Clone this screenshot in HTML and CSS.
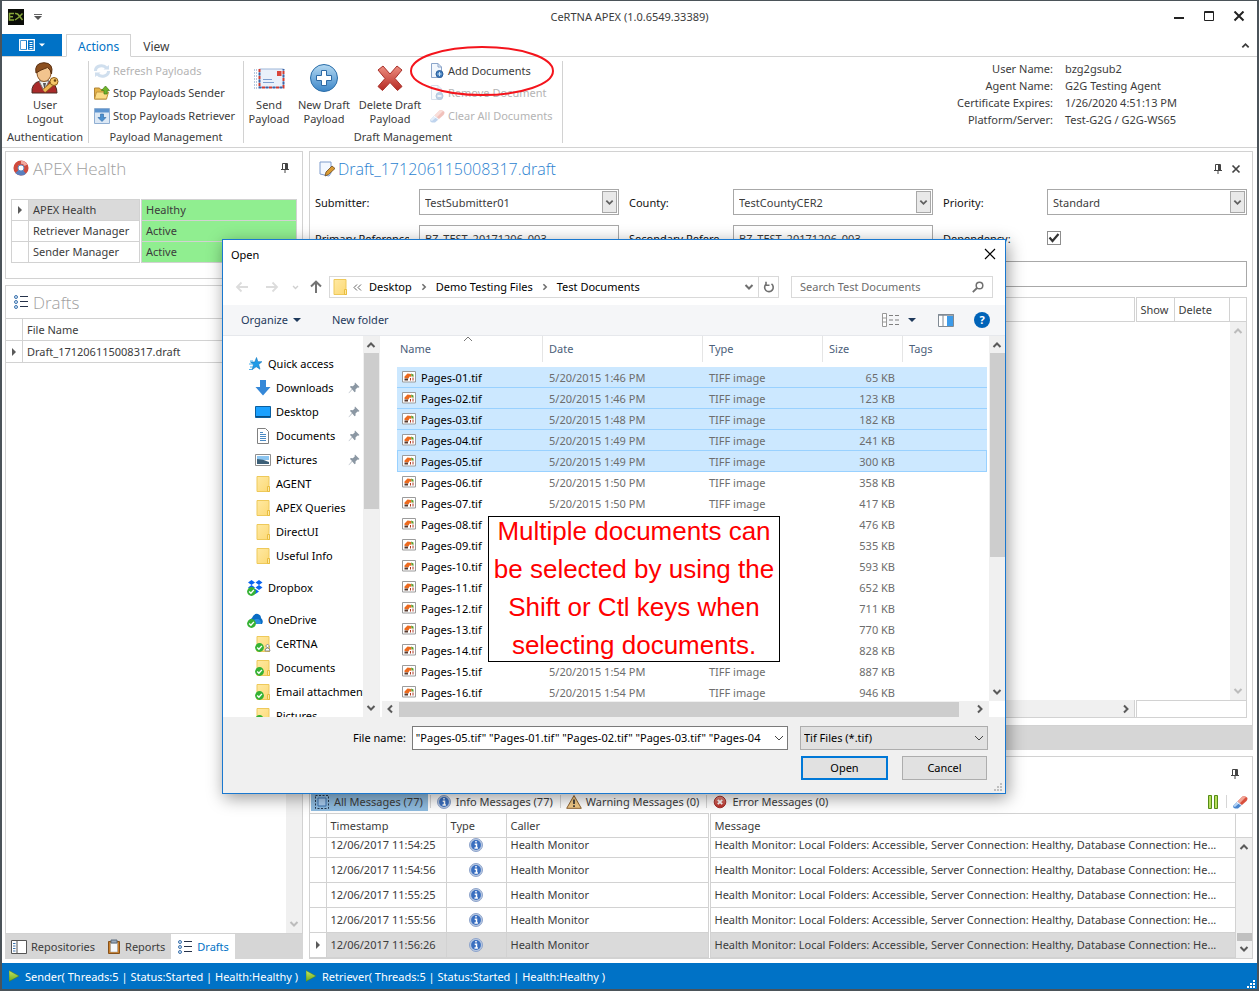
FILE: index.html
```html
<!DOCTYPE html>
<html lang="en">
<head>
<meta charset="utf-8">
<title>CeRTNA APEX</title>
<link rel="stylesheet" href="styles.css">
</head>
<body>
<svg class="defs" aria-hidden="true">
  <defs>
    <linearGradient id="gBlue" x1="0" y1="0" x2="0" y2="1"><stop offset="0" stop-color="#b4d9f2"/><stop offset="1" stop-color="#3c86c8"/></linearGradient>
    <linearGradient id="gRed" x1="0" y1="0" x2="0" y2="1"><stop offset="0" stop-color="#ee8e80"/><stop offset="1" stop-color="#b52a24"/></linearGradient>
    <linearGradient id="gFold" x1="0" y1="0" x2="1" y2="1"><stop offset="0" stop-color="#ffe9a2"/><stop offset="1" stop-color="#fcd975"/></linearGradient>
    <linearGradient id="gGreen" x1="0" y1="0" x2="0" y2="1"><stop offset="0" stop-color="#c5e860"/><stop offset="1" stop-color="#6aa81c"/></linearGradient>
    <symbol id="i-info" viewBox="0 0 16 16"><circle cx="8" cy="8" r="6.500" fill="#b9c9e2" stroke="#8ea4cc"/><circle cx="8" cy="8" r="4.900" fill="#3a6fc0"/><path d="M8 4v1.600M6.700 7.200H8.500v3.500M6.500 11h3.400" stroke="#fff" stroke-width="1.500" fill="none"/></symbol>
    <symbol id="i-up" viewBox="0 0 10 10"><path d="M1.500 7L5 3.500 8.500 7" fill="none" stroke="currentColor" stroke-width="2"/></symbol>
    <symbol id="i-down" viewBox="0 0 10 10"><path d="M1.500 3L5 6.500 8.500 3" fill="none" stroke="currentColor" stroke-width="2"/></symbol>
    <symbol id="i-left" viewBox="0 0 10 10"><path d="M7 1.500L3.500 5 7 8.500" fill="none" stroke="currentColor" stroke-width="2"/></symbol>
    <symbol id="i-right" viewBox="0 0 10 10"><path d="M3 1.500L6.500 5 3 8.500" fill="none" stroke="currentColor" stroke-width="2"/></symbol>
    <symbol id="i-caret" viewBox="0 0 8 8"><path d="M0 2h8L4 6z" fill="currentColor"/></symbol>
    <symbol id="i-tri" viewBox="0 0 8 8"><path d="M2 0l4 4-4 4z" fill="#5a5a5a"/></symbol>
    <symbol id="i-pin" viewBox="0 0 10 10"><path d="M2.500 6V.500h5V6M1 6.500h8M5 7v3" fill="none" stroke="#444"/><path d="M5 1h2v5H5z" fill="#444"/></symbol>
    <symbol id="i-close" viewBox="0 0 10 10"><path d="M1.500 1.500l7 7M8.500 1.500l-7 7" stroke="#444" stroke-width="1.700"/></symbol>
    <symbol id="i-folder" viewBox="0 0 16 16"><path d="M2 0.500h12v9l.5 6H2z" fill="url(#gFold)" stroke="#eec95a"/><path d="M12.500 10.500h2v5h-2z" fill="#ffe9a2" stroke="#e9bd3f"/></symbol>
    <symbol id="i-tick" viewBox="0 0 16 16"><circle cx="4.500" cy="11.500" r="4.400" fill="#35b234"/><path d="M2.200 11.500l1.700 1.800 3-3.400" stroke="#fff" stroke-width="1.400" fill="none"/></symbol>
    <symbol id="i-spin" viewBox="0 0 12 12"><path d="M7 .5l4.500 4.500-1.200.7-.8-.3-2 2 .1 2.200-1 .6L4.300 7.500 1 11 .5 11.200 1 10.600 4 7 2 5l.7-.9 2.200.1 2-2-.3-.9z" fill="#8b97a3"/></symbol>
    <symbol id="i-list" viewBox="0 0 16 16"><g fill="#d6e6f8" stroke="#3e74ad"><circle cx="3" cy="3" r="1.500"/><circle cx="3" cy="8" r="1.500"/><circle cx="3" cy="13" r="1.500"/></g><path d="M7 2.500h8M7 7.500h8M7 12.500h8" stroke="#26324a"/></symbol>
    <symbol id="i-tif" viewBox="0 0 14 12"><path d="M.5.500h13v10.500H.500z" fill="#fff" stroke="#9b9b9b"/><path d="M2.500 5.500l3-3 3.500.5.500 3-2-.5-1 2-4-.5z" fill="#ec6a1f"/><path d="M9 2.500l2.500 1v2.500L9.500 5z" fill="#5d9b2b"/><path d="M2.500 7.500H6V9.500H2.500z" fill="#57382c"/><path d="M8.500 7v2.500M11 6.500v3" stroke="#b03a24"/></symbol>
    <symbol id="i-eraser" viewBox="0 0 16 16"><path d="M1 12l4.500-4.500 4.500 3.500-4 3.500H3q-2-.5-2-2.500z" fill="#4a86cf"/><path d="M1 12l4.500-4.500 2 1.600L3 13z" fill="#b4d2f3"/><path d="M5.500 7.500l5-5q3-1 5 1.500 0 2-1 3l-4.500 4z" fill="#d8503e"/><path d="M5.500 7.500l5-5q2-.7 3.500.6L7.800 9.200z" fill="#f2a697"/><path d="M5 8l4.700 3.700" stroke="#fff"/></symbol>
    <symbol id="i-play" viewBox="0 0 10 12"><path d="M0 .5L10 6 0 11.500z" fill="url(#gGreen)" stroke="#4e7d1c" stroke-width=".5"/></symbol>
    <symbol id="i-doc" viewBox="0 0 16 16"><path d="M2.500.500h6.500l3.500 3.500v10.500h-10z" fill="#f2f7fd" stroke="#8ba5ca"/><path d="M9 .5V4h3.500" fill="none" stroke="#8ba5ca"/><circle cx="10.500" cy="11" r="3.500" fill="#3f7cbd" stroke="#2c5e99"/><path d="M8.500 11h4M10.500 9v4" stroke="#cfe3f6"/></symbol>
    <symbol id="i-docminus" viewBox="0 0 16 16"><path d="M2.500.500h6.500l3.500 3.500v10.500h-10z" fill="#f2f7fd" stroke="#8ba5ca"/><path d="M9 .5V4h3.500" fill="none" stroke="#8ba5ca"/><circle cx="10.500" cy="11" r="3.500" fill="#3f7cbd" stroke="#2c5e99"/><path d="M8.500 11h4" stroke="#fff" stroke-width="1.500"/></symbol>
    <symbol id="i-grip" viewBox="0 0 8 8"><path d="M6 0h2v2H6zM3 3h2v2H3zM6 3h2v2H6zM0 6h2v2H0zM3 6h2v2H3zM6 6h2v2H6z" fill="currentColor"/></symbol>
  </defs>
</svg>

<div class="app">
  <header class="titlebar">
    <div class="quick">
      <svg width="16" height="16" viewBox="0 0 16 16"><path d="M0 0h16v16H0z" fill="#0b0d08"/><path d="M6 4.500H1.500v6.500H6M1.500 7.700H5M7 4.500q2.500-.5 4 2l3.500 4.500M14.500 4.500l-4 4-3.500 2.500" fill="none" stroke="#86a63a" stroke-width="1.500"/></svg>
      <svg width="8" height="8" viewBox="0 0 8 8"><path d="M0 1.500h8" stroke="#666"/><path d="M0 3h8L4 7z" fill="#555"/></svg>
    </div>
    <h1>CeRTNA APEX (1.0.6549.33389)</h1>
    <div class="winbtns">
      <button aria-label="Minimize"><svg width="12" height="12" viewBox="0 0 12 12"><path d="M1 7h10" stroke="#222" stroke-width="2"/></svg></button>
      <button aria-label="Maximize"><svg width="12" height="12" viewBox="0 0 12 12"><path d="M1.500.500h9v9h-9zM1 1.500h10" fill="none" stroke="#222"/></svg></button>
      <button aria-label="Close"><svg width="12" height="12" viewBox="0 0 12 12"><path d="M1.500.500l9 9M10.500.500l-9 9" stroke="#222" stroke-width="2"/></svg></button>
    </div>
  </header>

  <nav class="tabs">
    <button class="filetab" aria-label="Application menu">
      <svg width="16" height="14" viewBox="0 0 16 14"><path d="M.7 1.700h14.600v10.600H.700z" fill="none" stroke="#fff" stroke-width="1.300"/><path d="M2 3h5v8H2z" fill="#fff"/><path d="M8.500 2v10M10.500 4.500h3M10.500 6.500h3M10.500 8.500h3M10.500 10.500h3" stroke="#fff"/></svg>
      <svg width="6" height="6"><use href="#i-caret"/></svg>
    </button>
    <button class="tab active">Actions</button>
    <button class="tab">View</button>
    <button class="collapse" aria-label="Collapse ribbon"><svg width="9" height="9"><use href="#i-up"/></svg></button>
  </nav>

  <section class="ribbon">
    <div class="group auth">
      <div class="tools">
        <button class="big">
          <svg width="32" height="32" viewBox="0 0 32 32"><path d="M3 31q-1-10 8-12h9q8 3 8 12z" fill="#a92a2a" stroke="#4c2a22"/><path d="M10 19l5 10 5-10z" fill="#f0f0f0" stroke="#777"/><path d="M14 21h3l-1.500 7z" fill="#555"/><ellipse cx="15" cy="11" rx="7" ry="8.500" fill="#f2c48e" stroke="#8a5524"/><path d="M7 11Q5 1 15 .7 25 1 22.500 12q-1-5-4-6.500Q11 8 7 11z" fill="#8c4f1e" stroke="#5b3010"/><path d="M15 29l8-7" stroke="#8a5a18" stroke-width="4.500"/><path d="M15 29l8-7" stroke="#efb652" stroke-width="3"/><circle cx="25" cy="19.500" r="4" fill="#f5c668" stroke="#8a5a18"/><circle cx="26" cy="18.500" r="1.300" fill="#6b4310"/></svg>
          <span>User<br>Logout</span>
        </button>
      </div>
      <div class="caption">Authentication</div>
    </div>
    <div class="group payload">
      <div class="tools">
        <div class="stack">
          <button class="small" disabled><svg width="16" height="16" viewBox="0 0 16 16"><path d="M1.500 8a6 5 0 0 1 11-3M14.500 8a6 5 0 0 1-11 3" fill="none" stroke="#7ba4cf" stroke-width="3"/><path d="M9.500 6.500h5.500V2zM6.500 9.500H1V14z" fill="#7ba4cf"/></svg>Refresh Payloads</button>
          <button class="small"><svg width="16" height="16" viewBox="0 0 16 16"><path d="M.5 3h5l1 1.500h6V14H.500z" fill="#e5b347" stroke="#b08436"/><path d="M.5 14l2-7h12l-2 7z" fill="#fbdc86" stroke="#c2953f"/><path d="M11.500 1l4 4.500h-2.300V9H10V5.500H7.500z" fill="#6fb52a" stroke="#447a18" stroke-width=".7"/></svg>Stop Payloads Sender</button>
          <button class="small"><svg width="16" height="16" viewBox="0 0 16 16"><path d="M.5.500h15v15H.500z" fill="#dce8f5" stroke="#8faed2"/><path d="M1 1h14v3.500H1z" fill="#5d94cf"/><path d="M6.500 6h3v3.500H12L8 13.500 4 9.500h2.500z" fill="#4a90d0" stroke="#2b66a3" stroke-width=".6"/></svg>Stop Payloads Retriever</button>
        </div>
      </div>
      <div class="caption">Payload Management</div>
    </div>
    <div class="group draft">
      <div class="tools">
        <button class="big send">
          <svg width="32" height="32" viewBox="0 0 32 32"><path d="M1 8h3M1 11h3M1 14h3M1 17h3M1 20h3M1 23h3M1 26h3" stroke="#6d91bd" stroke-dasharray="1 1"/><path d="M6.500 7h24v18.500h-24z" fill="#eaf1fa" stroke="#9db6d8"/><path d="M6.500 7v18.500h24V7" fill="none" stroke="#d23c32" stroke-width="2" stroke-dasharray="3 4"/><path d="M6.500 10.500v15h24V7" fill="none" stroke="#3b64a7" stroke-width="2" stroke-dasharray="3 4"/><path d="M24 9h4.500v5H24z" fill="#d9463c"/><path d="M10 17.500h9M10 20.500h11" stroke="#7c9ecf"/></svg>
          <span>Send<br>Payload</span>
        </button>
        <button class="big new">
          <svg width="32" height="32" viewBox="0 0 32 32"><circle cx="16" cy="16" r="13.500" fill="url(#gBlue)" stroke="#2a6da8"/><path d="M13.500 8.500h5v5h5v5h-5v5h-5v-5h-5v-5h5z" fill="#fff" stroke="#2c69a4"/></svg>
          <span>New Draft<br>Payload</span>
        </button>
        <button class="big del">
          <svg width="32" height="32" viewBox="0 0 32 32"><path d="M4 8l5-4 7 8 7-8 5 4-7 8.500 7 8-4.500 4-7.500-8-7.500 8-4.500-4 7-8z" fill="url(#gRed)" stroke="#a8302a"/></svg>
          <span>Delete Draft<br>Payload</span>
        </button>
        <div class="stack">
          <button class="small"><svg width="16" height="16"><use href="#i-doc"/></svg>Add Documents</button>
          <button class="small" disabled><svg width="16" height="16"><use href="#i-docminus"/></svg>Remove Document</button>
          <button class="small" disabled><svg width="16" height="16"><use href="#i-eraser"/></svg>Clear All Documents</button>
        </div>
      </div>
      <div class="caption">Draft Management</div>
    </div>
    <dl class="user">
      <dt>User Name:</dt><dd>bzg2gsub2</dd>
      <dt>Agent Name:</dt><dd>G2G Testing Agent</dd>
      <dt>Certificate Expires:</dt><dd>1/26/2020 4:51:13 PM</dd>
      <dt>Platform/Server:</dt><dd>Test-G2G / G2G-WS65</dd>
    </dl>
  </section>

  <main class="main">
    <aside class="side">
      <section class="panel health">
        <div class="phead">
          <svg width="16" height="16" viewBox="0 0 16 16"><circle cx="8" cy="8" r="5.300" fill="none" stroke="#cf4a3d" stroke-width="4.500"/><path d="M11.500 12A5.300 5.300 0 0 1 4 11.500" fill="none" stroke="#5a7fbd" stroke-width="4.500"/><path d="M8 2.300a5.700 5.700 0 0 1 5 3" fill="none" stroke="#f0aaa0" stroke-width="3"/><circle cx="8" cy="8" r="3" fill="#fff" stroke="#5e8cc4"/></svg>
          <h2>APEX Health</h2>
          <button class="pin" aria-label="Pin"><svg width="10" height="10"><use href="#i-pin"/></svg></button>
        </div>
        <table class="grid htable">
          <tr class="cur"><td class="ind"><svg width="8" height="8"><use href="#i-tri"/></svg></td><td class="nm">APEX Health</td><td class="ok">Healthy</td></tr>
          <tr><td class="ind"></td><td class="nm">Retriever Manager</td><td class="ok">Active</td></tr>
          <tr><td class="ind"></td><td class="nm">Sender Manager</td><td class="ok">Active</td></tr>
        </table>
      </section>
      <div class="draftbox">
        <section class="panel drafts">
          <div class="phead">
            <svg width="16" height="16"><use href="#i-list"/></svg>
            <h2>Drafts</h2>
          </div>
          <div class="withbar">
            <table class="grid dtable">
              <tr><th class="ind"></th><th>File Name</th></tr>
              <tr><td class="ind"><svg width="8" height="8"><use href="#i-tri"/></svg></td><td>Draft_171206115008317.draft</td></tr>
            </table>
            <div class="vbar dim"><svg width="10" height="10"><use href="#i-up"/></svg><svg class="end" width="10" height="10"><use href="#i-down"/></svg></div>
          </div>
        </section>
        <nav class="strip">
          <button><svg width="16" height="14" viewBox="0 0 16 14"><path d="M.5.500h15v13H.500zM6 1v12" fill="#fff" stroke="#555"/><path d="M2 3.500h2.500M2 6h2.500M2 8.500h2.500M2 11h2.500" stroke="#3e74ad"/></svg>Repositories</button>
          <button><svg width="14" height="16" viewBox="0 0 14 16"><path d="M1.500 2.500h11v12h-11z" fill="#c9802c" stroke="#875018"/><path d="M3.500 4h7v9h-7z" fill="#f5f8fc" stroke="#999" stroke-width=".5"/><path d="M4 1h6v3H4z" fill="#98a8bb" stroke="#5b6a7d"/></svg>Reports</button>
          <button class="on"><svg width="16" height="16"><use href="#i-list"/></svg>Drafts</button>
        </nav>
      </div>
    </aside>

    <div class="work">
      <section class="panel doc">
        <div class="phead">
          <svg width="16" height="16" viewBox="0 0 16 16"><path d="M1 1h11v11l-2 3-9-2z" fill="#f3f8ff" stroke="#7f9ccc"/><path d="M6 15l1-4 6-6 3 2.500-6.500 6z" fill="#d99a33" stroke="#6d4a1d" stroke-width=".8"/></svg>
          <h2 class="blue">Draft_171206115008317.draft</h2>
          <button class="pin" aria-label="Pin"><svg width="10" height="10"><use href="#i-pin"/></svg></button>
          <button class="pin" aria-label="Close tab"><svg width="10" height="10"><use href="#i-close"/></svg></button>
        </div>
        <form class="form">
          <label for="sub">Submitter:</label>
          <div class="combo"><select id="sub"><option>TestSubmitter01</option></select><span><svg width="9" height="9"><use href="#i-down"/></svg></span></div>
          <label for="cty">County:</label>
          <div class="combo"><select id="cty"><option>TestCountyCER2</option></select><span><svg width="9" height="9"><use href="#i-down"/></svg></span></div>
          <label for="pri">Priority:</label>
          <div class="combo"><select id="pri"><option>Standard</option></select><span><svg width="9" height="9"><use href="#i-down"/></svg></span></div>
          <label for="pref">Primary Reference</label>
          <input type="text" id="pref" value="BZ_TEST_20171206_003">
          <label for="sref">Secondary Refere</label>
          <input type="text" id="sref" value="BZ_TEST_20171206_003">
          <label for="dep">Dependency:</label>
          <div class="check"><input type="checkbox" id="dep" checked><svg width="14" height="14" viewBox="0 0 14 14"><path d="M2.500 6.500l3 3.500 6-7" fill="none" stroke="#333" stroke-width="2.200"/></svg></div>
          <label for="note">Notes:</label>
          <input type="text" id="note" class="wide">
        </form>
        <div class="docs">
          <table class="grid doctable">
            <tr><th></th><th class="show">Show</th><th class="dele">Delete</th><th class="corner"></th></tr>
          </table>
          <div class="docbody"><div class="vbar dim"><svg width="10" height="10"><use href="#i-up"/></svg><svg class="end" width="10" height="10"><use href="#i-down"/></svg></div></div>
          <div class="dochbar"><div class="track"><svg width="10" height="10"><use href="#i-right"/></svg></div><div class="box"></div></div>
        </div>
      </section>
      <div class="strip blank"></div>
      <section class="panel msgs">
        <div class="phead"><button class="pin" aria-label="Pin"><svg width="10" height="10"><use href="#i-pin"/></svg></button></div>
        <div class="mbar">
          <button class="on"><svg width="16" height="16" viewBox="0 0 16 16"><path d="M1.500 1.500h13v13h-13z" fill="none" stroke="#26384f" stroke-dasharray="2 1.500"/><path d="M4 4h8v8H4z" fill="#a9ccee" stroke="#3a73b0"/></svg>All Messages (77)</button>
          <button><svg width="16" height="16"><use href="#i-info"/></svg>Info Messages (77)</button>
          <button><svg width="16" height="16" viewBox="0 0 16 16"><path d="M8 1.500l7.300 12.800H.700z" fill="#f3cb87" stroke="#8c6130"/><path d="M8 5.500v4.500M8 11.300v1.700" stroke="#333" stroke-width="1.700"/></svg>Warning Messages (0)</button>
          <button><svg width="16" height="16" viewBox="0 0 16 16"><circle cx="8" cy="8" r="5.800" fill="url(#gRed)" stroke="#a5312b"/><path d="M5.800 5.800l4.400 4.400M10.200 5.800l-4.400 4.400" stroke="#fff" stroke-width="1.800"/></svg>Error Messages (0)</button>
          <button class="icon pause" aria-label="Pause"><svg width="12" height="16" viewBox="0 0 12 16"><path d="M1.500 1.500h3v13h-3zM7.500 1.500h3v13h-3z" fill="#b6dd5b" stroke="#558c17"/></svg></button>
          <button class="icon" aria-label="Clear"><svg width="16" height="16"><use href="#i-eraser"/></svg></button>
        </div>
        <table class="grid mtable mhead">
          <tr><th class="c0"></th><th class="c1">Timestamp</th><th class="c2">Type</th><th class="c3">Caller</th><th>Message</th><th class="c5"></th></tr>
        </table>
        <div class="mview">
          <div class="mrows">
            <table class="grid mtable">
              <tr><td class="c0"></td><td class="c1">12/06/2017 11:54:25</td><td class="c2"><svg width="16" height="16"><use href="#i-info"/></svg></td><td class="c3">Health Monitor</td><td>Health Monitor: Local Folders: Accessible, Server Connection: Healthy, Database Connection: He...</td></tr>
              <tr><td class="c0"></td><td class="c1">12/06/2017 11:54:56</td><td class="c2"><svg width="16" height="16"><use href="#i-info"/></svg></td><td class="c3">Health Monitor</td><td>Health Monitor: Local Folders: Accessible, Server Connection: Healthy, Database Connection: He...</td></tr>
              <tr><td class="c0"></td><td class="c1">12/06/2017 11:55:25</td><td class="c2"><svg width="16" height="16"><use href="#i-info"/></svg></td><td class="c3">Health Monitor</td><td>Health Monitor: Local Folders: Accessible, Server Connection: Healthy, Database Connection: He...</td></tr>
              <tr><td class="c0"></td><td class="c1">12/06/2017 11:55:56</td><td class="c2"><svg width="16" height="16"><use href="#i-info"/></svg></td><td class="c3">Health Monitor</td><td>Health Monitor: Local Folders: Accessible, Server Connection: Healthy, Database Connection: He...</td></tr>
              <tr class="cur"><td class="c0"><svg width="8" height="8"><use href="#i-tri"/></svg></td><td class="c1">12/06/2017 11:56:26</td><td class="c2"><svg width="16" height="16"><use href="#i-info"/></svg></td><td class="c3">Health Monitor</td><td>Health Monitor: Local Folders: Accessible, Server Connection: Healthy, Database Connection: He...</td></tr>
            </table>
          </div>
          <div class="vbar"><svg width="10" height="10"><use href="#i-up"/></svg><i class="thumb low"></i><svg width="10" height="10"><use href="#i-down"/></svg></div>
        </div>
      </section>
    </div>
  </main>

  <footer class="status">
    <svg width="10" height="12"><use href="#i-play"/></svg><span>Sender( Threads:5 | Status:Started | Health:Healthy )</span>
    <svg width="10" height="12"><use href="#i-play"/></svg><span>Retriever( Threads:5 | Status:Started | Health:Healthy )</span>
    <svg class="grip" width="8" height="8"><use href="#i-grip"/></svg>
  </footer>

  <svg class="ring" width="146" height="52" viewBox="0 0 146 52" aria-hidden="true"><ellipse cx="73" cy="26" rx="71" ry="24" fill="none" stroke="#f4141c" stroke-width="2"/></svg>

  <div class="dialog" role="dialog" aria-labelledby="dlgtitle">
    <div class="dtitle"><h2 id="dlgtitle">Open</h2><button aria-label="Close"><svg width="12" height="12" viewBox="0 0 12 12"><path d="M1 1l10 10M11 1L1 11" stroke="#000" stroke-width="1.200"/></svg></button></div>
    <div class="dnav">
      <button aria-label="Back"><svg width="14" height="14" viewBox="0 0 14 14"><path d="M13 7H2M6.500 2.500L2 7l4.500 4.500" fill="none" stroke="#dcdcdc" stroke-width="1.800"/></svg></button>
      <button aria-label="Forward"><svg width="14" height="14" viewBox="0 0 14 14"><path d="M1 7h11M7.500 2.500L12 7l-4.500 4.500" fill="none" stroke="#dcdcdc" stroke-width="1.800"/></svg></button>
      <button class="rec" aria-label="Recent"><svg width="7" height="7"><use href="#i-down"/></svg></button>
      <button aria-label="Up"><svg width="14" height="14" viewBox="0 0 14 14"><path d="M7 13V2M2 6.500L7 1.700l5 4.800" fill="none" stroke="#747474" stroke-width="2"/></svg></button>
      <div class="addr">
        <svg width="16" height="16"><use href="#i-folder"/></svg>
        <svg class="chev" width="9" height="9" viewBox="0 0 9 9"><path d="M4 1.500L1 4.500l3 3M8 1.500L5 4.500l3 3" fill="none" stroke="#666"/></svg>
        <button>Desktop</button><svg class="chev" width="8" height="8"><use href="#i-right"/></svg>
        <button>Demo Testing Files</button><svg class="chev" width="8" height="8"><use href="#i-right"/></svg>
        <button>Test Documents</button>
        <svg class="drop" width="10" height="10"><use href="#i-down"/></svg>
        <button class="refresh" aria-label="Refresh"><svg width="12" height="12" viewBox="0 0 12 12"><path d="M3 3.200a4.300 4.300 0 1 0 5.500-.3M3 .8v3.500h3.500" fill="none" stroke="#707070" stroke-width="1.600"/></svg></button>
      </div>
      <div class="search"><input type="text" aria-label="Search" placeholder="Search Test Documents"><svg width="12" height="12" viewBox="0 0 12 12"><circle cx="7.500" cy="4.500" r="3.300" fill="none" stroke="#707070" stroke-width="1.500"/><path d="M5 7L.8 11.200" stroke="#707070" stroke-width="1.800"/></svg></div>
    </div>
    <div class="dbar">
      <button>Organize<svg width="8" height="8"><use href="#i-caret"/></svg></button>
      <button class="newf">New folder</button>
      <button class="view" aria-label="View"><svg width="17" height="14" viewBox="0 0 17 14"><path d="M.5.500h4v13h-4zM1 5h3M1 9h3" fill="#fff" stroke="#999"/><path d="M7 2.500h4M13 2.500h4M7 7h4M13 7h4M7 11.500h4M13 11.500h4" stroke="#808080"/></svg><svg width="8" height="8"><use href="#i-caret"/></svg></button>
      <button aria-label="Preview pane"><svg width="16" height="13" viewBox="0 0 16 13"><path d="M.5.500h15v12H.500zM5 1v11" fill="#fff" stroke="#808a94"/><path d="M9 2h6v10H9z" fill="#3d9be9"/><path d="M0 1h16" stroke="#808a94" stroke-width="1.500"/></svg></button>
      <button class="help" aria-label="Help">?</button>
    </div>
    <div class="dbody">
      <div class="tree">
        <ul>
          <li><svg width="16" height="16" viewBox="0 0 16 16"><path d="M9.500 1.500l1.400 4.200h4l-3.200 2.800 1.300 4.700-3.800-2.500-4.200 3 1.500-5L3.500 6h4.300z" fill="#1e9be8" stroke="#1277be" stroke-width=".6"/><path d="M3 5h3M2 8h4M3 11h3M2 13.500h3" stroke="#49b0ee"/></svg>Quick access</li>
          <li class="sub"><svg width="16" height="16" viewBox="0 0 16 16"><path d="M5 0h6v7h4.500L8 15.500.5 7H5z" fill="#3588d8"/></svg>Downloads<svg class="tack" width="12" height="12"><use href="#i-spin"/></svg></li>
          <li class="sub"><svg width="16" height="16" viewBox="0 0 16 16"><path d="M.5 2.500h15v11H.500z" fill="#1ba1ff" stroke="#0b5f9f"/><path d="M1 12.500h14" stroke="#084e84"/></svg>Desktop<svg class="tack" width="12" height="12"><use href="#i-spin"/></svg></li>
          <li class="sub"><svg width="16" height="16" viewBox="0 0 16 16"><path d="M2.500.500h8l3 3v12h-11z" fill="#fff" stroke="#808080"/><path d="M5 4.500h3M5 6.500h6M5 8.500h6M5 10.500h6M5 12.500h6" stroke="#4b8ac4"/></svg>Documents<svg class="tack" width="12" height="12"><use href="#i-spin"/></svg></li>
          <li class="sub"><svg width="16" height="16" viewBox="0 0 16 16"><path d="M.5 2.500h15v11H.500z" fill="#fff" stroke="#8f8f8f"/><path d="M2 4h12v4H2z" fill="#8cc5f0"/><path d="M2 7q6 0 12 3v2H2z" fill="#3c5f77"/></svg>Pictures<svg class="tack" width="12" height="12"><use href="#i-spin"/></svg></li>
          <li class="sub"><svg width="16" height="16"><use href="#i-folder"/></svg>AGENT</li>
          <li class="sub"><svg width="16" height="16"><use href="#i-folder"/></svg>APEX Queries</li>
          <li class="sub"><svg width="16" height="16"><use href="#i-folder"/></svg>DirectUI</li>
          <li class="sub"><svg width="16" height="16"><use href="#i-folder"/></svg>Useful Info</li>
          <li class="root"><svg width="16" height="16" viewBox="0 0 16 16"><path d="M4.500 0L8 2.500 4.500 5 1 2.500zM12 0l3.500 2.500L12 5 8.500 2.500zM4.500 5L8 7.500 4.500 10 1 7.500zM12 5l3.500 2.500L12 10 8.500 7.500zM8.500 9l3.500 2.500L8.500 14 6 11.500z" fill="#0a64f0"/><use href="#i-tick"/></svg>Dropbox</li>
          <li class="root"><svg width="16" height="16" viewBox="0 0 16 16"><path d="M3 12q-2-4 2-6 2-5 6-4 3 1 3 4 3 3 1 6z" fill="#0a6cc4"/><path d="M6 12q0-5 4-5 4 0 4 5" fill="#2b8ee0"/><use href="#i-tick"/></svg>OneDrive</li>
          <li class="sub"><svg width="16" height="16"><use href="#i-folder"/><use href="#i-tick"/><path d="M10 15q0-3 2.500-3t2.500 3zM12.500 8.500a1.500 1.500 0 1 0 .1 0" fill="#fff" stroke="#888"/></svg>CeRTNA</li>
          <li class="sub"><svg width="16" height="16"><use href="#i-folder"/><use href="#i-tick"/></svg>Documents</li>
          <li class="sub"><svg width="16" height="16"><use href="#i-folder"/><use href="#i-tick"/></svg>Email attachments</li>
          <li class="sub"><svg width="16" height="16"><use href="#i-folder"/><use href="#i-tick"/></svg>Pictures</li>
        </ul>
        <div class="vbar"><svg width="10" height="10"><use href="#i-up"/></svg><i class="thumb tall"></i><svg class="end" width="10" height="10"><use href="#i-down"/></svg></div>
      </div>
      <div class="files">
        <div class="flist">
          <table>
            <thead><tr><th class="f1"><div>Name<svg width="10" height="6" viewBox="0 0 10 6"><path d="M1 5l4-4 4 4" fill="none" stroke="#777"/></svg></div></th><th class="f2"><div>Date</div></th><th class="f3"><div>Type</div></th><th class="f4"><div>Size</div></th><th><div class="last">Tags</div></th></tr></thead>
            <tbody>
              <tr class="sel"><td><svg width="14" height="12"><use href="#i-tif"/></svg>Pages-01.tif</td><td>5/20/2015 1:46 PM</td><td>TIFF image</td><td>65 KB</td><td></td></tr>
              <tr class="sel"><td><svg width="14" height="12"><use href="#i-tif"/></svg>Pages-02.tif</td><td>5/20/2015 1:46 PM</td><td>TIFF image</td><td>123 KB</td><td></td></tr>
              <tr class="sel"><td><svg width="14" height="12"><use href="#i-tif"/></svg>Pages-03.tif</td><td>5/20/2015 1:48 PM</td><td>TIFF image</td><td>182 KB</td><td></td></tr>
              <tr class="sel"><td><svg width="14" height="12"><use href="#i-tif"/></svg>Pages-04.tif</td><td>5/20/2015 1:49 PM</td><td>TIFF image</td><td>241 KB</td><td></td></tr>
              <tr class="sel focus"><td><svg width="14" height="12"><use href="#i-tif"/></svg>Pages-05.tif</td><td>5/20/2015 1:49 PM</td><td>TIFF image</td><td>300 KB</td><td></td></tr>
              <tr><td><svg width="14" height="12"><use href="#i-tif"/></svg>Pages-06.tif</td><td>5/20/2015 1:50 PM</td><td>TIFF image</td><td>358 KB</td><td></td></tr>
              <tr><td><svg width="14" height="12"><use href="#i-tif"/></svg>Pages-07.tif</td><td>5/20/2015 1:50 PM</td><td>TIFF image</td><td>417 KB</td><td></td></tr>
              <tr><td><svg width="14" height="12"><use href="#i-tif"/></svg>Pages-08.tif</td><td></td><td></td><td>476 KB</td><td></td></tr>
              <tr><td><svg width="14" height="12"><use href="#i-tif"/></svg>Pages-09.tif</td><td></td><td></td><td>535 KB</td><td></td></tr>
              <tr><td><svg width="14" height="12"><use href="#i-tif"/></svg>Pages-10.tif</td><td></td><td></td><td>593 KB</td><td></td></tr>
              <tr><td><svg width="14" height="12"><use href="#i-tif"/></svg>Pages-11.tif</td><td></td><td></td><td>652 KB</td><td></td></tr>
              <tr><td><svg width="14" height="12"><use href="#i-tif"/></svg>Pages-12.tif</td><td></td><td></td><td>711 KB</td><td></td></tr>
              <tr><td><svg width="14" height="12"><use href="#i-tif"/></svg>Pages-13.tif</td><td></td><td></td><td>770 KB</td><td></td></tr>
              <tr><td><svg width="14" height="12"><use href="#i-tif"/></svg>Pages-14.tif</td><td></td><td></td><td>828 KB</td><td></td></tr>
              <tr><td><svg width="14" height="12"><use href="#i-tif"/></svg>Pages-15.tif</td><td>5/20/2015 1:54 PM</td><td>TIFF image</td><td>887 KB</td><td></td></tr>
              <tr><td><svg width="14" height="12"><use href="#i-tif"/></svg>Pages-16.tif</td><td>5/20/2015 1:54 PM</td><td>TIFF image</td><td>946 KB</td><td></td></tr>
            </tbody>
          </table>
        </div>
        <div class="vbar"><svg width="10" height="10"><use href="#i-up"/></svg><i class="thumb mid"></i><svg class="end" width="10" height="10"><use href="#i-down"/></svg></div>
        <div class="hbar"><svg width="10" height="10"><use href="#i-left"/></svg><i></i><svg width="10" height="10"><use href="#i-right"/></svg></div>
      </div>
    </div>
    <div class="dfoot">
      <label for="fname">File name:</label>
      <div class="fname"><input type="text" id="fname" value='"Pages-05.tif" "Pages-01.tif" "Pages-02.tif" "Pages-03.tif" "Pages-04'><svg width="10" height="10" viewBox="0 0 10 10"><path d="M1 3l4 4 4-4" fill="none" stroke="#444"/></svg></div>
      <div class="right">
        <div class="filter"><select aria-label="File type"><option>Tif Files (*.tif)</option></select><svg width="10" height="10" viewBox="0 0 10 10"><path d="M1 3l4 4 4-4" fill="none" stroke="#444"/></svg></div>
        <div class="acts"><button class="primary">Open</button><button>Cancel</button></div>
      </div>
      <svg class="dgrip" width="8" height="8"><use href="#i-grip"/></svg>
    </div>
    <div class="callout"><p>Multiple documents can<br>be selected by using the<br>Shift or Ctl keys when<br>selecting documents.</p></div>
  </div>
</div>
</body>
</html>
```
FILE: styles.css
```css
* { box-sizing: border-box; }
body { margin: 0; font: 11px/16px "Noto Sans", "Open Sans", sans-serif; color: #3c3c3c; }
button, input, select { font: inherit; color: inherit; margin: 0; }
button { border: 0; background: none; padding: 0; text-align: left; white-space: nowrap; }
h1, h2, p, dl, dd, ul { margin: 0; padding: 0; font-weight: 400; }
ul { list-style: none; }
svg { display: block; flex: none; }
.defs { position: absolute; width: 0; height: 0; }

.app { position: relative; display: flex; flex-direction: column; height: 100vh; overflow: hidden; background: #fff; border: 2px solid #4b5359; border-top-width: 1px; }

/* Title bar */
.titlebar { display: grid; grid-template-columns: 1fr auto 1fr; align-items: center; height: 33px; padding-bottom: 1px; }
.titlebar h1 { font-size: 11px; }
.quick { display: flex; align-items: center; gap: 10px; padding-left: 6px; }
.winbtns { display: flex; justify-content: flex-end; gap: 18px; padding-right: 12px; }

/* Tabs */
.tabs { display: flex; height: 23px; border-bottom: 1px solid #d2d2d2; }
.filetab { display: flex; align-items: center; justify-content: center; gap: 4px; width: 60px; margin-right: 4px; background: #0072c6; color: #fff; }
.tab { padding: 3px 12px 0; font-size: 12px; }
.tab.active { margin-bottom: -1px; border: 1px solid #d2d2d2; border-bottom-color: #fff; background: #fff; color: #0072c6; padding: 2px 11px 0; }
.collapse { margin-left: auto; padding-right: 7px; }

/* Ribbon */
.ribbon { display: flex; height: 91px; padding-top: 4px; border-bottom: 1px solid #d2d2d2; }
.group { display: flex; flex-direction: column; height: 82px; border-right: 1px solid #d2d2d2; }
.group.auth { width: 87px; }
.group.payload { width: 155px; }
.group.draft { width: 319px; }
.tools { display: flex; flex: 1; justify-content: center; }
.caption { height: 12px; line-height: 12px; text-align: center; }
.big { display: flex; flex-direction: column; align-items: center; text-align: center; gap: 4px; padding-top: 1px; line-height: 14px; align-self: flex-start; }
.send { width: 50px; }
.new { width: 60px; }
.del { width: 72px; }
.stack { display: flex; flex-direction: column; flex: 1; padding-left: 5px; }
.draft .stack { padding-left: 3px; }
.small { display: flex; align-items: center; gap: 3px; height: 23px; }
.stack .small:first-child { height: 20px; }
.small:disabled { color: #b4b4b4; }
.small:disabled svg { opacity: 0.35; }
.user { display: grid; grid-template-columns: auto 118px; column-gap: 12px; grid-auto-rows: 17px; margin-left: auto; padding-right: 74px; align-self: start; }
.user dt { text-align: right; }

/* Panels */
.main { display: flex; flex: 1; min-height: 0; gap: 6px; padding: 3px 4px 4px 3px; }
.side { display: flex; flex-direction: column; gap: 6px; width: 298px; }
.work { display: flex; flex-direction: column; flex: 1; min-width: 0; }
.panel { border: 1px solid #d2d2d2; background: #fff; display: flex; flex-direction: column; }
.phead { display: flex; align-items: center; gap: 4px; height: 32px; padding: 0 12px 0 7px; }
.phead h2 { flex: 1; font: 300 17px/24px "Open Sans", "Noto Sans", sans-serif; color: #a0a0a0; padding-top: 1px; }
.phead h2.blue { color: #2b7fd0; font-size: 16px; padding-top: 0; }
.health { height: 128px; }
.grid { border-collapse: collapse; table-layout: fixed; width: 100%; }
.grid th, .grid td { border: 1px solid #d2d2d2; padding: 0 4px; text-align: left; font-weight: 400; overflow: hidden; white-space: nowrap; }
.grid .ind { width: 16px; padding: 0 4px; }
.htable { width: auto; margin: 15px 5px 0; }
.htable tr { height: 21px; }
.htable .nm { width: 112px; border-right: 3px double #d2d2d2; }
.htable .cur .nm { background: #dadada; }
.htable .ok { background: #90ee90; }
.draftbox { display: flex; flex-direction: column; flex: 1; min-height: 0; }
.drafts { flex: 1; }
.withbar { display: flex; flex: 1; align-items: flex-start; }
.dtable { flex: 1; width: auto; }
.dtable tr { height: 22px; }
.dtable th, .dtable td { border-left-width: 0; }
.vbar { display: flex; flex-direction: column; align-items: center; align-self: stretch; width: 16px; padding: 4px 0; background: #f0f0f0; color: #5a5a5a; flex: none; }
.vbar.dim { color: #bcbcbc; }
.vbar .end { margin-top: auto; }
.thumb { display: block; width: 15px; background: #cdcdcd; margin: 3px 0; }
.thumb.tall { height: 156px; }
.thumb.mid { height: 204px; }
.thumb.low { height: 8px; margin-top: auto; background: #c0c0c0; }
.strip { display: flex; height: 25px; background: #d6d6d6; }
.strip.blank { height: 24px; margin-bottom: 6px; }
.strip button { display: flex; align-items: center; gap: 4px; padding: 1px 6px 0; }
.strip .on { background: #fff; color: #0072c6; }

/* Draft form */
.doc { flex: 1; min-height: 0; padding: 0; }
.doc .phead { height: 37px; padding: 0 11px 4px 9px; gap: 3px; }
.doc .pin { margin-left: 5px; }
.form { display: grid; grid-template-columns: 94px 1fr 94px 1fr 94px 1fr; gap: 10px; grid-auto-rows: 26px; align-items: center; padding: 0 5px; color: #111; }
.form label { white-space: nowrap; overflow: hidden; padding-top: 1px; }
.form input[type=text], .form select { width: 100%; height: 26px; border: 1px solid #a8a8a8; background: #fff; padding: 1px 5px 0; color: #3c3c3c; appearance: none; border-radius: 0; }
.form .wide { grid-column: 2 / -1; }
.combo { display: grid; }
.combo > * { grid-area: 1 / 1; }
.combo span { display: grid; place-items: center; justify-self: end; align-self: center; width: 15px; height: 22px; margin-right: 2px; border: 1px solid #a8a8a8; background: #e9e9e9; color: #606060; pointer-events: none; }
.check { display: grid; justify-content: start; }
.check > * { grid-area: 1 / 1; pointer-events: none; }
.check input { display: block; appearance: none; width: 14px; height: 14px; border: 1px solid #8e8e8e; pointer-events: auto; }
.check input:not(:checked) + svg { display: none; }
.docs { display: flex; flex-direction: column; flex: 1; margin: 10px 5px 7px; border: 1px solid #d2d2d2; border-top: 0; }
.doctable tr { height: 24px; }
.doctable th { border-left: 0; }
.doctable .show { width: 39px; border-left: 3px double #d2d2d2; }
.doctable .dele { width: 55px; }
.doctable .corner { width: 17px; border-right: 0; }
.docbody { display: flex; justify-content: flex-end; flex: 1; }
.dochbar { display: flex; height: 17px; }
.dochbar .track { display: flex; flex: 1; align-items: center; justify-content: flex-end; padding-right: 3px; background: #f0f0f0; color: #5a5a5a; border-right: 1px solid #d2d2d2; }
.dochbar .box { width: 110px; margin-left: 1px; border: 1px solid #d2d2d2; border-width: 1px 0 0 1px; }

/* Messages */
.msgs { height: 203px; }
.msgs .phead { height: 34px; justify-content: flex-end; }
.mbar { display: flex; height: 22px; padding: 0 4px 2px 1px; }
.mbar button { display: flex; align-items: center; gap: 4px; padding: 2px 5px 0 3px; }
.mbar button:nth-child(n+2) { position: relative; padding: 2px 5px 0 8px; }
.mbar button:nth-child(n+2):not(.pause)::before { content: ""; position: absolute; left: 2px; top: 4px; height: 13px; border-left: 1px solid #d6d6d6; }
.mbar .on { background: #8fbce0; }
.mbar .pause { margin-left: auto; }
.mbar .icon:last-child { padding-right: 0; }
.mtable .c0 { width: 16px; padding: 0 4px; border-left: 0; }
.mtable .c1 { width: 120px; }
.mtable .c2 { width: 60px; }
td.c2 svg { margin: 0 auto; }
.mtable .c3 { width: 203px; border-right: 3px double #d2d2d2; }
.mtable .c5 { width: 17px; border-right: 0; }
.mhead tr { height: 24px; }
.mview { display: flex; flex: 1; min-height: 0; }
.mrows { display: flex; flex-direction: column; justify-content: flex-end; flex: 1; min-width: 0; overflow: hidden; }
.mrows tr { height: 25px; }
.mrows .cur { background: #dadada; }
.mrows .cur .c0 { background: #fff; }

/* Status */
.status { display: flex; align-items: center; height: 26px; padding: 0 2px 0 7px; background: #0072c6; color: #fff; }
.status span { margin: 0 8px 0 6px; padding-top: 1px; }
.status .grip { margin: auto 0 1px auto; }

.ring { position: absolute; left: 407px; top: 44px; }

/* File dialog */
.dialog { position: absolute; left: 220px; top: 238px; width: 784px; background: #fff; border: 1px solid #1a78cf; box-shadow: 2px 4px 16px rgba(0, 0, 0, 0.4); color: #000; }
.dtitle { display: flex; justify-content: space-between; height: 36px; padding: 7px 9px 0 8px; }
.dtitle h2 { font: inherit; }
.dtitle button { align-self: flex-start; padding-top: 1px; }
.dnav { display: flex; align-items: center; height: 22px; padding: 0 12px; color: #6f6f6f; }
.dnav > button { margin-right: 16px; }
.dnav > .rec { color: #d0d0d0; margin: 0 10px 0 -3px; }
.dnav > button:nth-child(4) { margin-right: 6px; }
.addr { display: flex; align-items: center; flex: 1; height: 22px; border: 1px solid #d9d9d9; padding-left: 2px; }
.addr button { color: #000; }
.addr .chev { margin: 0 8px; }
.addr svg:first-child + .chev { margin: 0 7px 0 5px; }
.addr .drop { margin-left: auto; margin-right: 4px; }
.addr .refresh { display: grid; place-items: center; width: 20px; height: 20px; border-left: 1px solid #d9d9d9; }
.search { display: flex; align-items: center; width: 202px; height: 22px; margin-left: 12px; padding: 0 8px; border: 1px solid #d9d9d9; }
.search input { flex: 1; min-width: 0; border: 0; padding: 0; }
.search input::placeholder { color: #6d6d6d; }
.dbar { display: flex; align-items: center; height: 31px; margin-top: 7px; padding: 0 15px 0 18px; background: #f5f6f8; border-bottom: 1px solid #e6e8ec; color: #1e395b; }
.dbar button { display: flex; align-items: center; gap: 5px; }
.dbar .newf { margin-left: 31px; }
.dbar .view { margin-left: auto; gap: 9px; margin-right: 22px; }
.dbar .help { justify-content: center; margin-left: 20px; width: 16px; height: 16px; border-radius: 50%; background: #0063b8; color: #fff; font-weight: 700; }
.dbody { display: flex; height: 381px; }
.tree { display: flex; width: 157px; border-right: 1px solid #efefef; overflow: hidden; }
.tree ul { flex: 1; min-width: 0; padding-top: 16px; overflow: hidden; }
.tree li { display: flex; align-items: center; gap: 5px; height: 24px; padding-left: 24px; white-space: nowrap; }
.tree .sub { padding-left: 32px; }
.tree .root { margin-top: 8px; }
.tree .tack { margin: 0 3px 0 auto; }
.files { display: grid; grid-template-columns: 1fr 16px; grid-template-rows: 1fr 16px; flex: 1; min-width: 0; padding-left: 2px; }
.flist { overflow: hidden; padding: 0 2px 0 15px; height: 365px; }
.flist table { width: 100%; border-collapse: separate; border-spacing: 0; table-layout: fixed; }
.flist th { height: 31px; padding: 0; vertical-align: top; text-align: left; font-weight: 400; color: #4c607a; }
.flist th div { position: relative; height: 26px; padding: 5px 6px; border-right: 1px solid #e5e5e5; }
.flist th .last { border-right: 0; }
.flist th svg { position: absolute; left: 66px; top: 0; }
.flist .f1 div { padding-left: 3px; }
.flist .f1 { width: 146px; }
.flist .f2 { width: 160px; }
.flist .f3 { width: 120px; }
.flist .f4 { width: 80px; }
.flist td { height: 21px; padding: 1px 6px 0; border-bottom: 1px solid transparent; color: #6d6d6d; white-space: nowrap; }
.flist td:first-child { color: #000; padding-left: 5px; }
.flist td svg { display: inline-block; vertical-align: -1px; margin-right: 5px; }
.flist td:nth-child(4) { text-align: right; padding-right: 8px; }
.sel td { background: #cce8ff; border-bottom-color: #99d1ff; }
.sel.focus td:first-child { box-shadow: inset 1px 0 0 #99d1ff; }
.sel.focus td:last-child { box-shadow: inset -1px 0 0 #99d1ff; }
.hbar { display: flex; align-items: center; justify-content: space-between; background: #f0f0f0; padding: 0 4px 0 3px; color: #5a5a5a; }
.hbar i { flex: 1; height: 15px; background: #cdcdcd; margin: 0 16px 0 4px; }
.dfoot { display: flex; align-items: flex-start; height: 76px; padding: 9px 17px 0 130px; background: #f0f0f0; position: relative; }
.dfoot label { line-height: 24px; margin-right: 6px; }
.fname, .filter { display: flex; align-items: center; height: 24px; border: 1px solid #7a7a7a; background: #fff; padding: 0 3px; }
.fname { flex: 1; gap: 5px; }
.fname input { flex: 1; min-width: 0; padding: 0; border: 0; background: none; }
.right { width: 188px; margin-left: 12px; }
.filter { border-color: #adadad; background: #e1e1e1; }
.filter select { flex: 1; appearance: none; border: 0; background: none; padding: 0; }
.acts { display: flex; gap: 14px; padding: 6px 1px 0; }
.acts button { flex: 1; height: 24px; border: 1px solid #adadad; background: #e1e1e1; text-align: center; }
.acts .primary { border: 2px solid #0078d7; }
.dgrip { position: absolute; right: 3px; bottom: 2px; color: #bfbfbf; }
.callout { position: absolute; left: 265px; top: 276px; width: 292px; height: 146px; border: 1px solid #000; background: #fff; color: #f00; font: 26px/38px "Liberation Sans", Arial, sans-serif; text-align: center; white-space: nowrap; }
.callout p { margin-top: -5px; }
```
